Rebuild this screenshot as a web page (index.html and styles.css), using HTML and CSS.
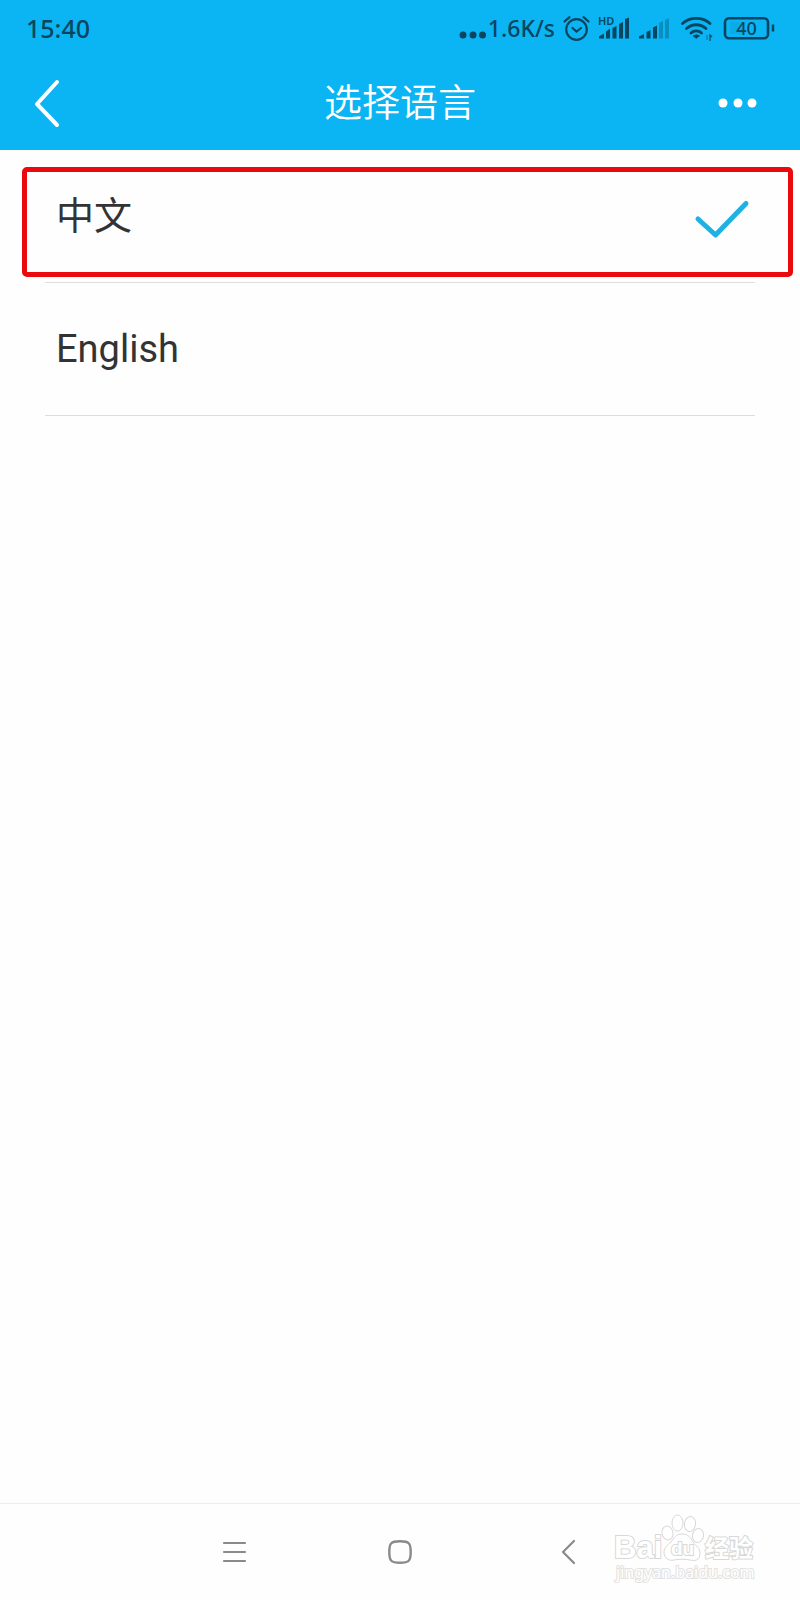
FILE: index.html
```html
<!DOCTYPE html>
<html lang="zh-CN">
<head>
    <meta charset="UTF-8">
    <meta name="viewport" content="width=device-width, initial-scale=1.0">
    <title>选择语言</title>
    <link rel="stylesheet" href="styles.css">
</head>
<body>
    <header class="header">
        <!-- Status bar -->
        <div class="status-bar">
            <span class="time">15:40</span>
            <div class="status-icons">
                <span class="speed">
                    <svg width="28" height="24" viewBox="0 0 28 24" fill="currentColor" aria-hidden="true">
                        <circle cx="5" cy="19" r="3.5"/>
                        <circle cx="15" cy="19" r="3.5"/>
                        <circle cx="24.5" cy="19" r="3.5"/>
                    </svg>
                    1.6K/s
                </span>
                <svg width="28" height="24" viewBox="0 0 28 24" fill="none" stroke="currentColor" stroke-width="2.2" stroke-linecap="round" aria-hidden="true">
                    <circle cx="13.5" cy="13.5" r="10.3"/>
                    <path d="M9.5 12l4 3.5 4.5-3.5M1.5 5.5L6.5 1.2M20.5 1.2l5 4.3"/>
                </svg>
                <svg width="32" height="24" viewBox="0 0 32 24" fill="currentColor" aria-hidden="true">
                    <text class="hd" x="-1" y="9">HD</text>
                    <path d="M0 22.5v-2l5-3v5zM7 22.5v-7l4-3v10zM13.5 22.5V12l4-2v12.5zM20 22.5V8l4-2v16.5zM26 22.5V3l4-1.5v21z"/>
                </svg>
                <svg width="32" height="24" viewBox="0 0 32 24" fill="currentColor" aria-hidden="true">
                    <path d="M0 22.5v-2l5-2.5v4.5zM7.5 22.5V16l4-2v8.5zM14 22.5v-11l4-2v13z"/>
                    <path opacity=".35" d="M20 22.5V7l4-2v17.5zM26 22.5V4l4-2v20.5z"/>
                </svg>
                <svg width="34" height="24" viewBox="0 0 34 24" fill="none" stroke="currentColor" stroke-width="2.8" stroke-linecap="round" aria-hidden="true">
                    <path d="M3.5 7.5C11 .7 23.5.7 31 7.5M7.5 12.5c6-5 13.5-5 19.5 0M12 17c3-2.8 7.5-2.8 10.5 0"/>
                    <path d="M14.5 19.8q3-2 6 0l-3 2.2z" fill="currentColor" stroke-width="1"/>
                    <path opacity=".4" d="M28 19v5" stroke-width="1.5" stroke-linecap="butt"/>
                    <path d="M31 25v-6l2 2" stroke-width="1.2" stroke-linecap="butt"/>
                </svg>
                <svg width="54" height="24" viewBox="0 0 54 24" fill="none" stroke="currentColor" stroke-width="2.6" role="img" aria-label="电量 40">
                    <rect x="4" y="2.3" width="43" height="20" rx="4"/>
                    <path d="M52 8.5v7" stroke-width="2.5"/>
                    <rect x="9" y="6" width="14" height="12" fill="currentColor" stroke="none" opacity=".08"/>
                    <text class="battery" x="25.5" y="19" text-anchor="middle">40</text>
                </svg>
            </div>
        </div>

        <!-- Title bar -->
        <div class="title-bar">
            <button type="button" class="icon-btn" aria-label="返回">
                <svg width="28" height="50" viewBox="0 0 28 50" fill="none" stroke="currentColor" stroke-width="4" stroke-linecap="round" stroke-linejoin="round">
                    <path d="M24 4L4 26l20 21"/>
                </svg>
            </button>
            <h1>选择语言</h1>
            <button type="button" class="icon-btn more" aria-label="更多">
                <svg width="40" height="12" viewBox="0 0 40 12" fill="currentColor">
                    <circle cx="6" cy="6" r="4.5"/>
                    <circle cx="21" cy="6" r="4.5"/>
                    <circle cx="35" cy="6" r="4.5"/>
                </svg>
            </button>
        </div>
    </header>

    <!-- Language list -->
    <main class="languages">
        <div class="row highlight">
            <input type="radio" id="zh" name="language" value="zh" checked>
            <label for="zh">
                中文
                <svg class="check" width="56" height="40" viewBox="0 0 56 40" fill="none" stroke="currentColor" stroke-width="5" stroke-linecap="round" stroke-linejoin="round" aria-hidden="true">
                    <path d="M4 20l17.5 16L52 4.5"/>
                </svg>
            </label>
        </div>
        <div class="row">
            <input type="radio" id="en" name="language" value="en">
            <label for="en">
                English
                <svg class="check" width="56" height="40" viewBox="0 0 56 40" fill="none" stroke="currentColor" stroke-width="5" stroke-linecap="round" stroke-linejoin="round" aria-hidden="true">
                    <path d="M4 20l17.5 16L52 4.5"/>
                </svg>
            </label>
        </div>
    </main>

    <!-- System navigation -->
    <footer class="nav-bar">
        <div class="nav-buttons">
            <button type="button" class="icon-btn" aria-label="菜单">
                <svg width="26" height="26" viewBox="0 0 26 26" fill="none" stroke="currentColor" stroke-width="2.2" stroke-linecap="round">
                    <path d="M2 4h21M2 13h21M2 22h21"/>
                </svg>
            </button>
            <button type="button" class="icon-btn" aria-label="主页">
                <svg width="26" height="26" viewBox="0 0 26 26" fill="none" stroke="currentColor" stroke-width="2.4">
                    <path d="M2.3 13C2.3 4 4 2.3 13 2.3S23.7 4 23.7 13 22 23.7 13 23.7 2.3 22 2.3 13z"/>
                </svg>
            </button>
            <button type="button" class="icon-btn" aria-label="后退">
                <svg width="26" height="26" viewBox="0 0 26 26" fill="none" stroke="currentColor" stroke-width="2.2" stroke-linecap="round" stroke-linejoin="round">
                    <path d="M22 2L11 13l11 11"/>
                </svg>
            </button>
        </div>
        <svg class="watermark" width="146" height="72" viewBox="0 0 146 72">
            <ellipse cx="56.5" cy="20" rx="5.5" ry="7" transform="rotate(-12 56.5 20)"/>
            <ellipse cx="66.5" cy="10" rx="5.5" ry="8"/>
            <ellipse cx="79" cy="11" rx="5.5" ry="7.5" transform="rotate(8 79 11)"/>
            <ellipse cx="87" cy="22.5" rx="5.5" ry="7" transform="rotate(12 87 22.5)"/>
            <path d="M71 21c6 0 8 3 11 8 3 4 7 6 7 11 0 8-6 8-10 7-5-1-11-1-16 0-5 1-10-1-10-8 0-5 4-7 7-10 3-4 5-8 11-8z"/>
            <text class="brand" x="3" y="45">Bai</text>
            <text class="du" x="60" y="42">du</text>
            <text class="jingyan" x="94" y="44">经验</text>
            <text class="site" x="5" y="65">jingyan.baidu.com</text>
        </svg>
    </footer>
</body>
</html>
```
FILE: styles.css
```css
* {
    box-sizing: border-box;
}

body {
    display: flex;
    flex-direction: column;
    min-height: 100vh;
    margin: 0;
    background-color: #fefefe;
    color: #333;
    font-family: Roboto, "Noto Sans CJK SC", sans-serif;
}

svg {
    display: block;
    flex: none;
    overflow: visible;
}

.header {
    background-color: #0bb5f3;
    color: #fff;
}

.status-bar {
    display: flex;
    align-items: center;
    justify-content: space-between;
    height: 56px;
    padding: 0 25px 0 26px;
    color: #074560;
    font-family: "Noto Sans", sans-serif;
    font-size: 25px;
    font-weight: 500;
}

.status-icons {
    display: flex;
    align-items: center;
    gap: 8px;
}

.speed {
    display: flex;
    align-items: center;
    gap: 2px;
    font-size: 23px;
}

.hd {
    font-size: 11px;
    font-weight: 600;
}

.battery {
    fill: currentColor;
    stroke: none;
    font-size: 18px;
    font-weight: 500;
}

.title-bar {
    display: grid;
    grid-template-columns: 1fr auto 1fr;
    align-items: center;
    height: 94px;
    padding: 0 43px 0 33px;
}

h1 {
    margin: 0 0 0 10px;
    font-size: 38px;
    font-weight: 350;
    line-height: 48px;
}

.icon-btn {
    justify-self: start;
    padding: 0;
    border: none;
    background: none;
    color: inherit;
    cursor: pointer;
}

.more {
    justify-self: end;
}

.languages {
    flex: 1;
    padding: 0 45px;
}

.row {
    position: relative;
    border-bottom: 1px solid #ddd;
}

.row input {
    position: absolute;
    opacity: 0;
}

.row label {
    display: flex;
    align-items: center;
    justify-content: space-between;
    height: 132px;
    padding: 0 5px 0 11px;
    font-size: 38px;
    cursor: pointer;
}

.row.highlight label {
    padding-bottom: 8px;
}

.check {
    visibility: hidden;
    margin-top: 14px;
    color: #1eb1e4;
}

.row input:checked + label .check {
    visibility: visible;
}

/* red frame around the chosen row */
.highlight::after {
    content: "";
    position: absolute;
    top: 17px;
    right: -38px;
    bottom: 5px;
    left: -23px;
    border: 5px solid #ea0a0e;
    border-radius: 5px;
    pointer-events: none;
}

.nav-bar {
    position: relative;
    display: flex;
    align-items: center;
    justify-content: center;
    height: 97px;
    border-top: 1px solid #eee;
    color: #8a8a8a;
}

.nav-buttons {
    display: grid;
    grid-template-columns: repeat(3, 1fr);
    width: 62%;
}

.nav-buttons .icon-btn {
    justify-self: center;
}

.watermark {
    position: absolute;
    right: 43px;
    bottom: 15px;
    fill: #fff;
    stroke: #d8d8d8;
    stroke-width: 1;
}

.watermark text {
    font-family: "Liberation Sans", "Noto Sans CJK SC", sans-serif;
    font-weight: 700;
    stroke-width: 2;
    paint-order: stroke;
}

.watermark .brand {
    font-size: 31px;
}

.watermark .du {
    font-size: 19px;
}

.watermark .jingyan {
    font-size: 24px;
}

.watermark .site {
    font-family: "Noto Sans", sans-serif;
    font-size: 16px;
    font-weight: 400;
    stroke: #e2e2e2;
}
```
